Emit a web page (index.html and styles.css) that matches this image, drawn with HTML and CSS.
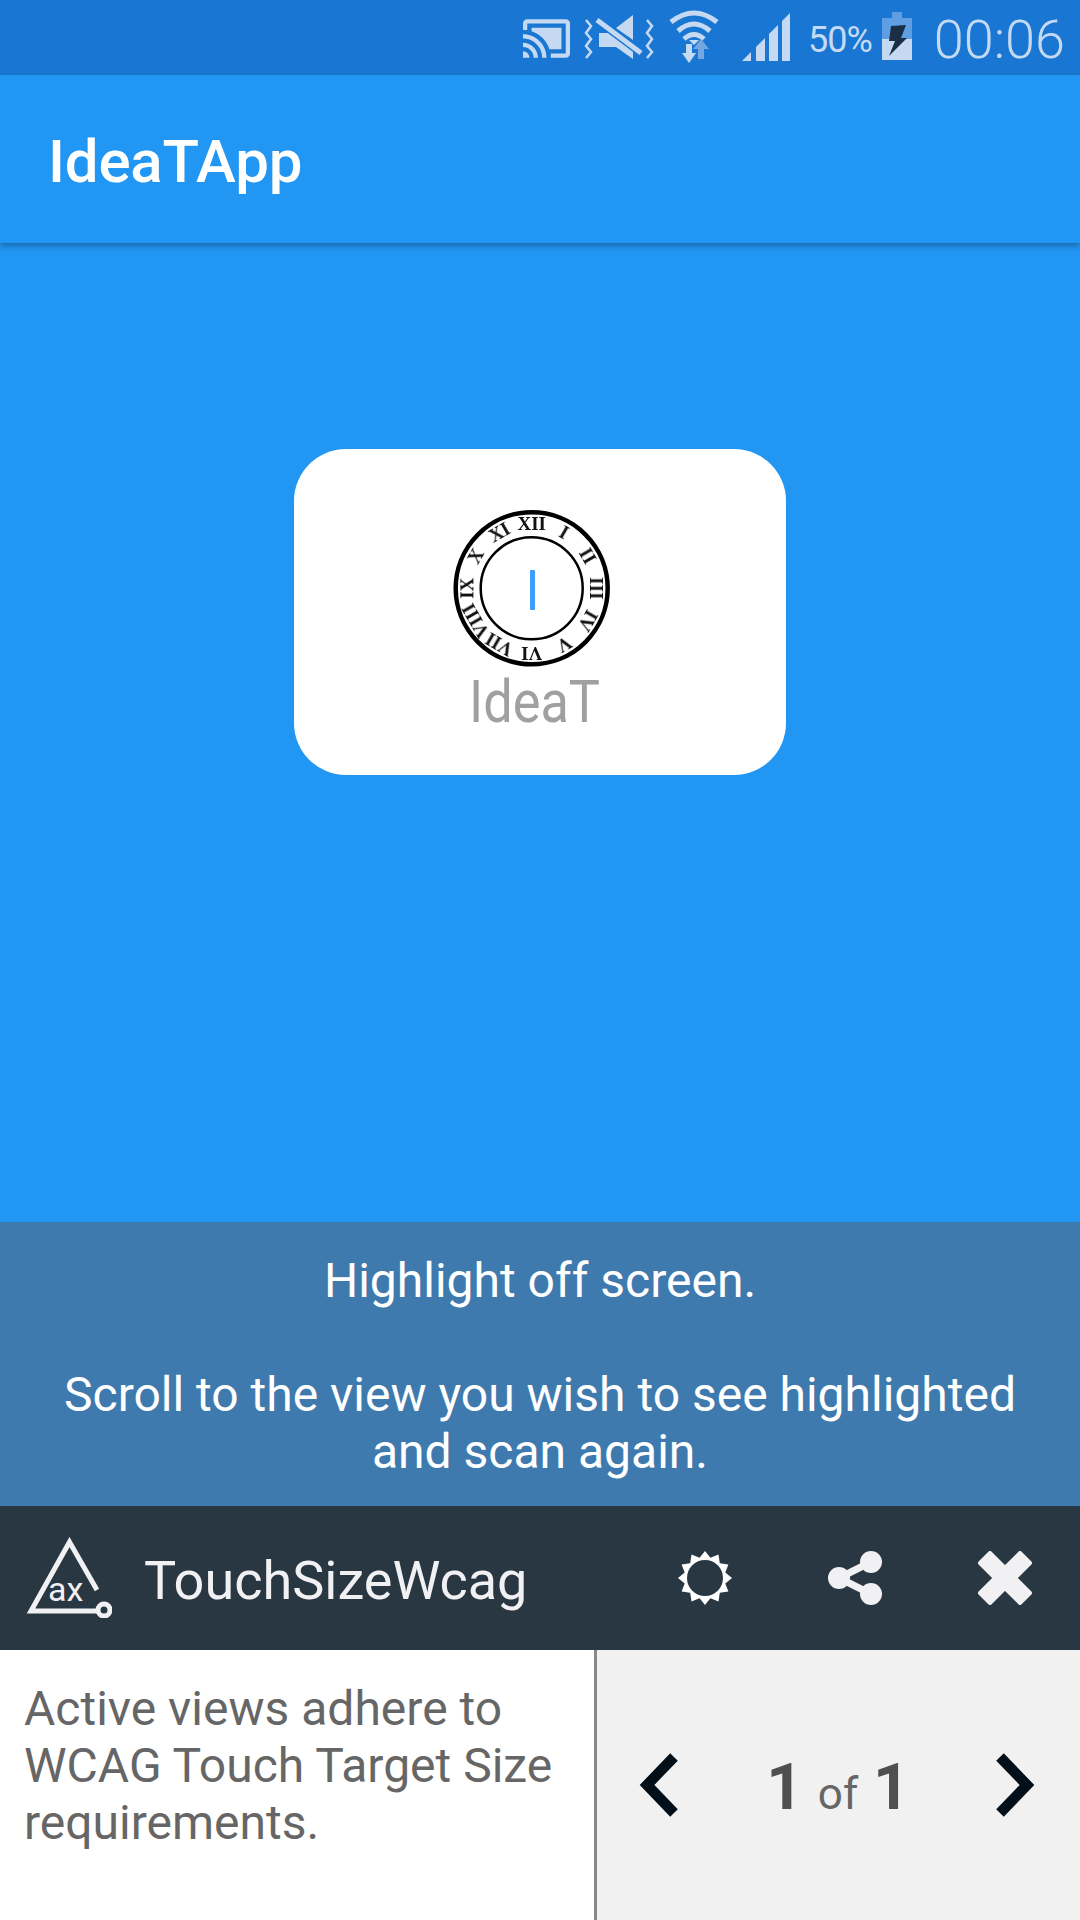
FILE: index.html
```html
<!DOCTYPE html>
<html lang="en">
<head>
  <meta charset="UTF-8">
  <meta name="viewport" content="width=device-width, initial-scale=1.0">
  <title>IdeaTApp</title>
  <link rel="stylesheet" href="styles.css">
</head>
<body>
  <div class="screen">
    <!-- status bar -->
    <div class="status-bar">
      <svg class="ic-cast" width="47" height="39" viewBox="1 3 22 18"><path d="M1 18v3h3c0-1.66-1.34-3-3-3zm0-4v2c2.76 0 5 2.24 5 5h2c0-3.87-3.13-7-7-7zm18-7H5v1.63c3.96 1.28 7.09 4.41 8.37 8.37H19V7zM1 10v2c4.97 0 9 4.03 9 9h2c0-6.08-4.93-11-11-11zm20-7H3c-1.1 0-2 .9-2 2v3h2V5h18v14h-7v2h7c1.1 0 2-.9 2-2V5c0-1.1-.9-2-2-2z"/></svg>
      <svg class="ic-mute" width="70" height="44" viewBox="0 0 70 44">
        <polygon points="32,13 49,0 49,25"/>
        <polygon points="15,18 15,32 32,32 49,44 49,35 28,18"/>
        <line class="ln line-bg" x1="13" y1="8" x2="57" y2="41" stroke-width="3"/>
        <line class="ln" x1="13" y1="5" x2="57" y2="38" stroke-width="5"/>
        <polyline class="ln" stroke-width="2.5" points="2,5 7,11 2,18 7,24 2,31 7,37 2,43"/>
        <polyline class="ln" stroke-width="2.5" points="63,5 68,11 63,18 68,24 63,31 68,37 63,43"/>
      </svg>
      <svg class="ic-wifi" width="50" height="53" viewBox="0 0 50 53">
        <path class="ln" stroke-width="5" d="M2,12 Q25,-6 48,12"/>
        <path class="ln" stroke-width="5" d="M9,21 Q25,7 41,21"/>
        <path class="ln" stroke-width="5" d="M15,29 Q25,20 35,29"/>
        <polygon points="25,35 20,30 30,30"/>
        <polygon class="dim" points="32,29 40,39 35,39 35,49 29,49 29,39 24,39"/>
        <polygon points="20,53 13,43 17,43 17,34 23,34 23,43 27,43"/>
      </svg>
      <svg class="ic-signal" width="48" height="48" viewBox="0 0 48 48">
        <polygon points="0,48 9,39 9,48"/>
        <polygon points="14,48 14,34 23,25 23,48"/>
        <polygon points="27,48 27,21 36,12 36,48"/>
        <polygon points="40,48 40,8 48,0 48,48"/>
      </svg>
      <span class="battery-pct">50%</span>
      <svg class="ic-battery" width="30" height="48" viewBox="0 0 30 48">
        <rect class="dim" x="10" y="0" width="10" height="6"/>
        <rect class="dim" x="0" y="6" width="30" height="21"/>
        <rect x="0" y="27" width="30" height="21"/>
        <polygon class="bolt" points="9,14 24,13 19,26 25,26 7,44 13,29 7,29"/>
      </svg>
      <span class="clock">00:06</span>
    </div>

    <!-- app bar -->
    <div class="app-bar">IdeaTApp</div>

    <!-- content -->
    <div class="content">
      <div class="logo-card">
        <svg width="492" height="326" viewBox="0 0 492 326">
          <circle class="ring" cx="237.7" cy="139.3" r="76" stroke-width="4.5"/>
          <circle class="ring" cx="237.7" cy="139.3" r="51" stroke-width="2.5"/>
          <g class="numerals">
            <text x="237.7" y="81" transform="rotate(0 237.7 139.3)">XII</text>
            <text x="237.7" y="81" transform="rotate(30 237.7 139.3)">I</text>
            <text x="237.7" y="81" transform="rotate(60 237.7 139.3)">II</text>
            <text x="237.7" y="81" transform="rotate(90 237.7 139.3)">III</text>
            <text x="237.7" y="81" transform="rotate(120 237.7 139.3)">IV</text>
            <text x="237.7" y="81" transform="rotate(150 237.7 139.3)">V</text>
            <text x="237.7" y="81" transform="rotate(180 237.7 139.3)">VI</text>
            <text x="237.7" y="81" transform="rotate(210 237.7 139.3)">VII</text>
            <text x="237.7" y="81" transform="rotate(240 237.7 139.3)">VIII</text>
            <text x="237.7" y="81" transform="rotate(270 237.7 139.3)">IX</text>
            <text x="237.7" y="81" transform="rotate(300 237.7 139.3)">X</text>
            <text x="237.7" y="81" transform="rotate(330 237.7 139.3)">XI</text>
          </g>
          <rect class="hand" x="236" y="121" width="5" height="40" rx="1"/>
          <text class="logo-name" x="175" y="273" textLength="131" lengthAdjust="spacingAndGlyphs">IdeaT</text>
        </svg>
      </div>
    </div>

    <!-- highlight message -->
    <div class="highlight-msg">
      <p>Highlight off screen.</p>
      <p>Scroll to the view you wish to see highlighted and scan again.</p>
    </div>

    <!-- scanner header -->
    <div class="scan-header">
      <svg class="ax-logo" width="86" height="81" viewBox="0 0 86 81">
        <path class="ax-line" d="M71,53 L43.5,5 L5,74 L72,74"/>
        <circle class="ax-line" cx="78" cy="73" r="6"/>
        <text class="ax-text" x="22" y="64">ax</text>
      </svg>
      <span class="scan-title">TouchSizeWcag</span>
      <div class="scan-actions">
        <div class="action-btn">
          <svg width="54" height="54" viewBox="0 0 54 54">
            <polygon class="sun" points="27,0 32.4,6.7 40.5,3.6 41.8,12.2 50.4,13.5 47.3,21.6 54,27 47.3,32.4 50.4,40.5 41.8,41.8 40.5,50.4 32.4,47.3 27,54 21.6,47.3 13.5,50.4 12.2,41.8 3.6,40.5 6.7,32.4 0,27 6.7,21.6 3.6,13.5 12.2,12.2 13.5,3.6 21.6,6.7"/>
            <circle class="sun-hole" cx="27" cy="27" r="18"/>
          </svg>
        </div>
        <div class="action-btn">
          <svg class="light-fill" width="54" height="54" viewBox="0 0 54 54">
            <line class="share-line" x1="11" y1="27" x2="43" y2="11"/>
            <line class="share-line" x1="11" y1="27" x2="43" y2="43"/>
            <circle cx="11" cy="27" r="11"/>
            <circle cx="43" cy="11" r="11"/>
            <circle cx="43" cy="43" r="11"/>
          </svg>
        </div>
        <div class="action-btn">
          <svg class="light-fill" width="54" height="54" viewBox="0 0 54 54">
            <polygon class="close-x" points="2,12 12,2 27,17 42,2 52,12 37,27 52,42 42,52 27,37 12,52 2,42 17,27"/>
          </svg>
        </div>
      </div>
    </div>

    <!-- scanner result -->
    <div class="scan-body">
      <div class="result-text">Active views adhere to WCAG Touch Target Size requirements.</div>
      <div class="pager">
        <svg class="chevron" width="41" height="66" viewBox="0 0 41 66"><polyline points="36,5 9,33 36,61"/></svg>
        <div class="pager-count"><b>1</b> of <b>1</b></div>
        <svg class="chevron" width="41" height="66" viewBox="0 0 41 66"><polyline points="5,5 32,33 5,61"/></svg>
      </div>
    </div>
  </div>
</body>
</html>
```

FILE: styles.css
```css
* {
  box-sizing: border-box;
}
html, body {
  margin: 0;
  padding: 0;
}
body {
  font-family: Roboto, "Liberation Sans", sans-serif;
}
.screen {
  width: 1080px;
  height: 1920px;
  display: flex;
  flex-direction: column;
  overflow: hidden;
  background: #2196F3;
}

/* status bar */
.status-bar {
  height: 75px;
  flex: none;
  background: #1976D2;
  color: #c5daf2;
  fill: #c5daf2;
  display: flex;
  align-items: flex-start;
  padding-right: 15px;
  justify-content: flex-end;
}
.ic-cast { margin-top: 19px; margin-right: 14px; }
.ic-mute { margin-top: 15px; margin-right: 15px; }
.ic-wifi { margin-top: 10px; margin-right: 23px; }
.ic-signal { margin-top: 13px; margin-right: 18px; }
.ic-battery { margin-top: 12px; margin-right: 22px; }
.battery-pct {
  font-size: 36px;
  line-height: 42px;
  margin-top: 19px;
  margin-right: 10px;
  letter-spacing: -1px;
}
.clock {
  font-size: 54px;
  line-height: 64px;
  margin-top: 8px;
  font-weight: 300;
}
.ln {
  fill: none;
  stroke: #c5daf2;
}
.ic-mute .line-bg {
  stroke: #1976D2;
}
.status-bar .dim {
  fill: #5f9ee3;
}
.ic-wifi .dim {
  fill: #74a6e0;
}
.bolt {
  fill: #1a2f45;
}

/* app bar */
.app-bar {
  height: 168px;
  flex: none;
  background: #2196F3;
  color: #fff;
  font-size: 60px;
  font-weight: 500;
  letter-spacing: -0.2px;
  display: flex;
  align-items: center;
  padding: 4px 0 0 48px;
  box-shadow: 0 3px 6px rgba(0, 0, 0, 0.3);
  position: relative;
}

/* content */
.content {
  flex: 1;
  padding-top: 206px;
  display: flex;
  justify-content: center;
  align-items: flex-start;
}
.logo-card {
  width: 492px;
  height: 326px;
  background: #fff;
  border-radius: 52px;
}
.logo-card svg {
  display: block;
}
.ring {
  fill: none;
  stroke: #000;
}
.numerals text {
  font-family: "Liberation Serif", serif;
  font-weight: 700;
  font-size: 19px;
  text-anchor: middle;
  fill: #111;
  filter: blur(0.4px);
}
.hand {
  fill: #3d9eff;
}
.logo-name {
  font-size: 59px;
  font-weight: 400;
  fill: #a0a0a0;
  filter: blur(0.6px);
}

/* highlight message */
.highlight-msg {
  height: 284px;
  flex: none;
  background: #3f7aae;
  color: #fff;
  font-size: 48px;
  line-height: 57px;
  text-align: center;
  padding: 30px 48px 0;
}
.highlight-msg p {
  margin: 0 0 57px;
}

/* scanner header */
.scan-header {
  height: 144px;
  flex: none;
  background: #283741;
  color: #f1f1f4;
  display: flex;
  align-items: center;
  padding-left: 26px;
}
.ax-logo {
  margin-top: -2px;
}
.ax-line {
  fill: none;
  stroke: #f1f1f4;
  stroke-width: 5;
}
.ax-text {
  font-size: 34px;
  fill: #f1f1f4;
}
.scan-title {
  font-size: 54px;
  margin-left: 32px;
  padding-top: 4px;
}
.scan-actions {
  margin-left: auto;
  display: flex;
}
.action-btn {
  width: 150px;
  display: flex;
  justify-content: center;
}
.sun {
  fill: #fff;
}
.sun-hole {
  fill: #283741;
}
.light-fill {
  fill: #f1f1f4;
}
.share-line {
  stroke: #f1f1f4;
  stroke-width: 7;
}
.close-x {
  stroke: #f1f1f4;
  stroke-width: 4;
  stroke-linejoin: round;
}

/* scanner result */
.scan-body {
  height: 270px;
  flex: none;
  display: flex;
  background: #fff;
}
.result-text {
  width: 597px;
  flex: none;
  border-right: 3px solid #888;
  color: #666;
  font-size: 48px;
  line-height: 57px;
  padding: 30px 20px 0 24px;
}
.pager {
  flex: 1;
  background: #f1f1f1;
  display: flex;
  align-items: center;
  justify-content: space-between;
  padding: 0 44px 0 41px;
}
.pager-count {
  color: #666;
  font-size: 44px;
  word-spacing: 4px;
  padding: 4px 0 0 2px;
}
.pager-count b {
  color: #4f4f4f;
  font-size: 64px;
  font-weight: 700;
}
.chevron polyline {
  fill: none;
  stroke: #020f19;
  stroke-width: 10.5;
}
```
